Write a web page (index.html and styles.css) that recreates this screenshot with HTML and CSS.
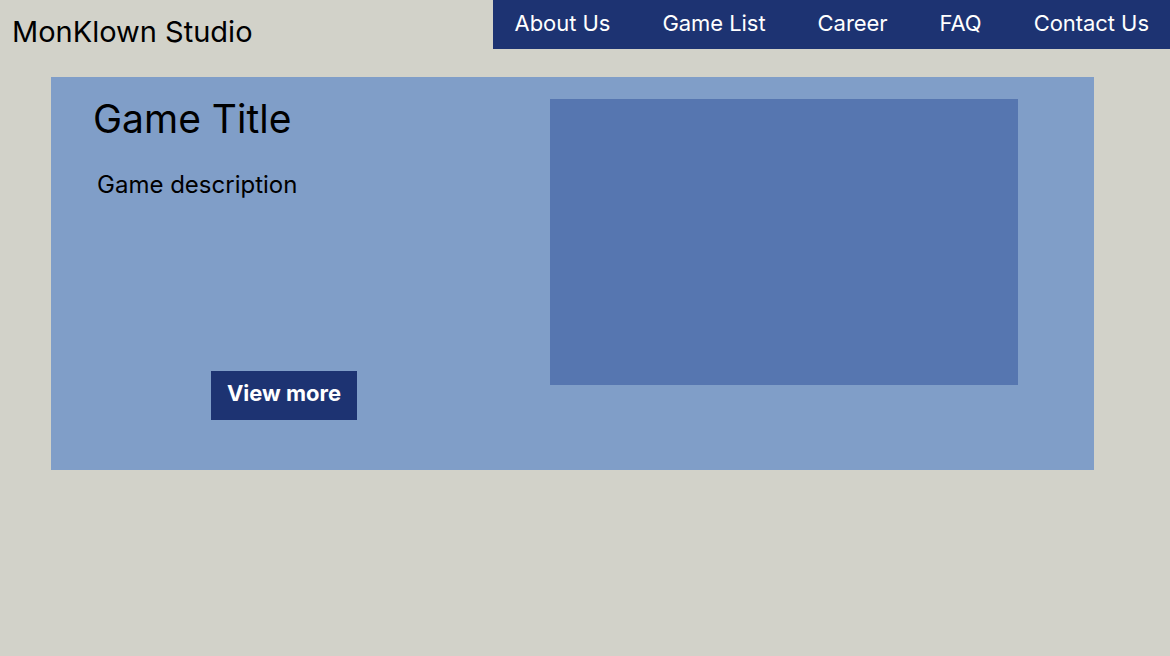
FILE: index.html
```html
<!DOCTYPE html>
<html lang="en">
<head>
<meta charset="utf-8">
<title>MonKlown Studio</title>
<link rel="stylesheet" href="styles.css">
</head>
<body>
<header class="site-header">
  <div class="brand">MonKlown Studio</div>
  <nav class="main-nav">
    <a href="#">About Us</a>
    <a href="#">Game List</a>
    <a href="#">Career</a>
    <a href="#">FAQ</a>
    <a href="#">Contact Us</a>
  </nav>
</header>
<main class="content">
  <section class="game-card">
    <div class="game-info">
      <h1 class="game-title">Game Title</h1>
      <p class="game-desc">Game description</p>
      <a class="view-more" href="#">View more</a>
    </div>
    <div class="game-image"></div>
  </section>
</main>
</body>
</html>
```
FILE: styles.css
```css
* { box-sizing: border-box; }
html, body {
  margin: 0;
  padding: 0;
}
body {
  background: #d2d2c9;
  font-family: Inter, "Liberation Sans", sans-serif;
  color: #000;
  width: 1170px;
  height: 656px;
  overflow: hidden;
}
.site-header {
  display: flex;
  align-items: flex-start;
  height: 49px;
}
.brand {
  font-size: 29px;
  line-height: 35px;
  padding: 14px 0 0 12px;
}
.main-nav {
  margin-left: auto;
  background: #1d3372;
  height: 49px;
  display: flex;
  align-items: center;
  gap: 52px;
  padding: 0 21px 3px 22px;
}
.main-nav a {
  color: #fff;
  text-decoration: none;
  font-size: 22px;
  letter-spacing: -0.05px;
}
.content {
  padding: 28px 0 0 51px;
}
.game-card {
  width: 1043px;
  height: 393px;
  background: #809ec8;
  display: flex;
}
.game-info {
  flex: 1;
  display: flex;
  flex-direction: column;
  align-items: flex-start;
  padding: 18px 0 0 42px;
}
.game-title {
  margin: 0;
  font-size: 39px;
  font-weight: 400;
  line-height: 47px;
}
.game-desc {
  margin: 28px 0 0 4px;
  font-size: 24px;
  line-height: 29px;
}
.view-more {
  margin: 172px 0 0 118px;
  width: 146px;
  height: 49px;
  background: #1d3372;
  color: #fff;
  text-decoration: none;
  font-weight: 700;
  font-size: 22px;
  display: flex;
  align-items: center;
  justify-content: center;
  padding-bottom: 6px;
}
.game-image {
  width: 468px;
  height: 286px;
  margin: 22px 76px 0 0;
  background: #5676b0;
}
```
